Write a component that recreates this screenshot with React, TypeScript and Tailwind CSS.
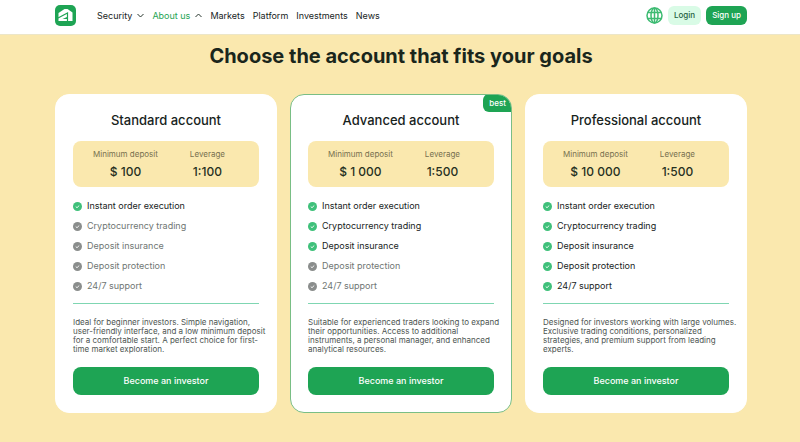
const navLinks = [
  { label: "Security", menu: "closed" },
  { label: "About us", menu: "open" },
  { label: "Markets" },
  { label: "Platform" },
  { label: "Investments" },
  { label: "News" },
];

const features = [
  "Instant order execution",
  "Cryptocurrency trading",
  "Deposit insurance",
  "Deposit protection",
  "24/7 support",
];

type Account = {
  name: string;
  deposit: string;
  leverage: string;
  included: number;
  text: string;
  best?: boolean;
};

const accounts: Account[] = [
  {
    name: "Standard account",
    deposit: "$ 100",
    leverage: "1:100",
    included: 1,
    text: "Ideal for beginner investors. Simple navigation, user-friendly interface, and a low minimum deposit for a comfortable start. A perfect choice for first-time market exploration.",
  },
  {
    name: "Advanced account",
    deposit: "$ 1 000",
    leverage: "1:500",
    included: 3,
    text: "Suitable for experienced traders looking to expand their opportunities. Access to additional instruments, a personal manager, and enhanced analytical resources.",
    best: true,
  },
  {
    name: "Professional account",
    deposit: "$ 10 000",
    leverage: "1:500",
    included: 5,
    text: "Designed for investors working with large volumes. Exclusive trading conditions, personalized strategies, and premium support from leading experts.",
  },
];

function Logo() {
  return (
    <svg viewBox="0 0 42 42" className="size-[21px]" aria-hidden="true">
      <rect width="42" height="42" rx="10" fill="#1ea454" />
      <path d="M7 16 L19 8 H25 L35 15 V32 H7 Z" fill="#fff" />
      <path d="M6 26 L25 16 V32" fill="none" stroke="#1ea454" strokeWidth="2.4" />
      <path d="M15 28 L24 24 V28 Z" fill="#1ea454" />
    </svg>
  );
}

function Globe() {
  return (
    <svg viewBox="0 0 34 34" className="size-[17px]" fill="none" stroke="#3dbb72" strokeWidth="3" aria-hidden="true">
      <circle cx="17" cy="17" r="15" />
      <ellipse cx="17" cy="17" rx="7" ry="15" />
      <path d="M17 2 V32 M4 11 H30 M4 23 H30" />
    </svg>
  );
}

function Chevron({ up }: { up: boolean }) {
  return (
    <svg viewBox="0 0 14 10" className="h-[5px] w-[7px]" fill="none" stroke="#26352d" strokeWidth="2" aria-hidden="true">
      <path d={up ? "M1 8 L7 2 L13 8" : "M1 2 L7 8 L13 2"} />
    </svg>
  );
}

function CheckIcon({ active }: { active: boolean }) {
  return (
    <svg viewBox="0 0 18 18" className="size-[9px] shrink-0" aria-hidden="true">
      <circle cx="9" cy="9" r="9" fill={active ? "#3fc07a" : "#8a8d8c"} />
      <path d="M5.5 9.2 L8 11.4 L12.5 7" fill="none" stroke="#fff" strokeWidth="1.8" />
    </svg>
  );
}

function AccountCard({ account }: { account: Account }) {
  return (
    <article
      className={`relative flex flex-col overflow-hidden rounded-[14px] border bg-white px-[17px] pt-4 pb-[17px] ${
        account.best ? "border-[#79be85]" : "border-white"
      }`}
    >
      {account.best && (
        <span className="absolute -top-px -right-px rounded-l-md bg-[#1ea454] px-[6px] text-[8px] leading-[18px] font-medium text-white">
          best
        </span>
      )}
      <h2 className="text-center text-[13px] leading-[18px] font-medium text-[#17231c]">{account.name}</h2>

      <dl className="mt-3 flex gap-8 rounded-lg bg-[#fae8ae] pt-2 pb-[7px] pl-5 text-center">
        <div>
          <dt className="text-[8px] leading-[10px] text-[#77704f]">Minimum deposit</dt>
          <dd className="mt-[5px] text-[12px] leading-4 font-medium text-[#26301f]">{account.deposit}</dd>
        </div>
        <div>
          <dt className="text-[8px] leading-[10px] text-[#77704f]">Leverage</dt>
          <dd className="mt-[5px] text-[12px] leading-4 font-medium text-[#26301f]">{account.leverage}</dd>
        </div>
      </dl>

      <ul className="mt-[13px] flex flex-col gap-2">
        {features.map((feature, i) => (
          <li
            key={feature}
            className={`flex items-center gap-[5px] text-[9px] leading-3 ${
              i < account.included ? "text-[#17231c]" : "text-[#6f7673]"
            }`}
          >
            <CheckIcon active={i < account.included} />
            {feature}
          </li>
        ))}
      </ul>

      <hr className="mt-[11px] border-[#7fd6b2]" />
      <p className="mt-[14px] -mr-2 mb-[13px] text-[8px] leading-[9px] text-[#4d5551]">{account.text}</p>
      <button type="button" className="mt-auto rounded-lg bg-[#1ea454] text-[9px] leading-7 font-medium text-white">
        Become an investor
      </button>
    </article>
  );
}

export default function App() {
  return (
    <div className="min-h-screen bg-[#fae8ae] font-['Inter',sans-serif]">
      {/* Header */}
      <header className="flex items-center border-b border-[#ece6c8] bg-white pt-[5px] pr-[53px] pb-2 pl-[55px]">
        <a href="#" aria-label="Home">
          <Logo />
        </a>
        <nav className="ml-[21px] flex items-center gap-2 text-[9px] leading-3 text-[#17231c]">
          {navLinks.map((link) => (
            <a
              key={link.label}
              href="#"
              className={`flex items-center gap-[5px] ${link.menu === "open" ? "text-[#1ea454]" : ""}`}
            >
              {link.label}
              {link.menu && <Chevron up={link.menu === "open"} />}
            </a>
          ))}
        </nav>
        <div className="ml-auto flex items-center gap-[5px] text-[8px] leading-[19px] font-medium">
          <button type="button" aria-label="Language">
            <Globe />
          </button>
          <a href="#" className="rounded-md bg-[#d9fbe6] px-[6px] text-[#24623f]">
            Login
          </a>
          <a href="#" className="rounded-md bg-[#1ea454] px-[6px] text-white">
            Sign up
          </a>
        </div>
      </header>

      {/* Accounts */}
      <main className="pt-[7px] pr-[53px] pb-7 pl-[55px]">
        <h1 className="text-center text-[20px] leading-7 font-bold text-[#1a261c]">
          Choose the account that fits your goals
        </h1>
        <section className="mt-6 grid grid-cols-3 gap-[13px]">
          {accounts.map((account) => (
            <AccountCard key={account.name} account={account} />
          ))}
        </section>
      </main>
    </div>
  );
}
